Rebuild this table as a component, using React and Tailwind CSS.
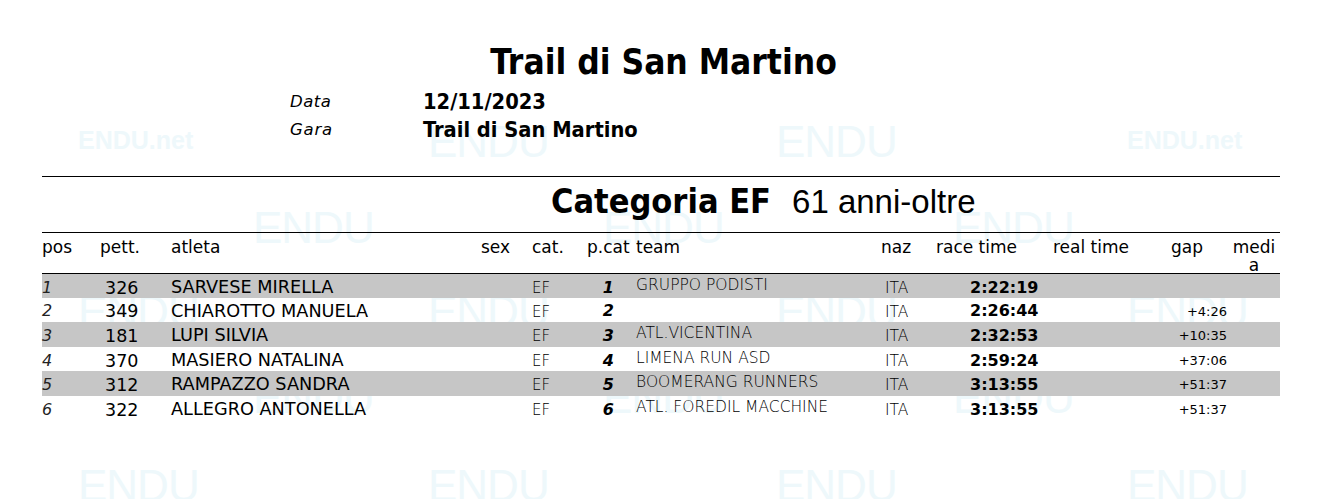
import React from "react";

const rows = [
  { pos: "1", pett: "326", name: "SARVESE MIRELLA", cat: "EF", pcat: "1", team: "GRUPPO PODISTI", naz: "ITA", race: "2:22:19", gap: "", gray: true, h: "h-[24px]" },
  { pos: "2", pett: "349", name: "CHIAROTTO MANUELA", cat: "EF", pcat: "2", team: "", naz: "ITA", race: "2:26:44", gap: "+4:26", gray: false, h: "h-[24px]" },
  { pos: "3", pett: "181", name: "LUPI SILVIA", cat: "EF", pcat: "3", team: "ATL.VICENTINA", naz: "ITA", race: "2:32:53", gap: "+10:35", gray: true, h: "h-[25px]" },
  { pos: "4", pett: "370", name: "MASIERO NATALINA", cat: "EF", pcat: "4", team: "LIMENA RUN ASD", naz: "ITA", race: "2:59:24", gap: "+37:06", gray: false, h: "h-[24px]" },
  { pos: "5", pett: "312", name: "RAMPAZZO SANDRA", cat: "EF", pcat: "5", team: "BOOMERANG RUNNERS", naz: "ITA", race: "3:13:55", gap: "+51:37", gray: true, h: "h-[25px]" },
  { pos: "6", pett: "322", name: "ALLEGRO ANTONELLA", cat: "EF", pcat: "6", team: "ATL. FOREDIL MACCHINE", naz: "ITA", race: "3:13:55", gap: "+51:37", gray: false, h: "h-[24px]" },
];

const marks = [
  { t: "ENDU.net", x: "left-[78px]", y: "top-[128px]", s: "small" },
  { t: "ENDU", x: "left-[428px]", y: "top-[120px]" },
  { t: "ENDU", x: "left-[776px]", y: "top-[120px]" },
  { t: "ENDU.net", x: "left-[1127px]", y: "top-[128px]", s: "small" },
  { t: "ENDU", x: "left-[253px]", y: "top-[206px]" },
  { t: "ENDU", x: "left-[603px]", y: "top-[206px]" },
  { t: "ENDU", x: "left-[953px]", y: "top-[206px]" },
  { t: "ENDU", x: "left-[78px]", y: "top-[290px]" },
  { t: "ENDU", x: "left-[428px]", y: "top-[290px]" },
  { t: "ENDU", x: "left-[776px]", y: "top-[290px]" },
  { t: "ENDU", x: "left-[1127px]", y: "top-[290px]" },
  { t: "ENDU", x: "left-[253px]", y: "top-[376px]" },
  { t: "ENDU", x: "left-[603px]", y: "top-[376px]" },
  { t: "ENDU", x: "left-[953px]", y: "top-[376px]" },
  { t: "ENDU", x: "left-[78px]", y: "top-[464px]" },
  { t: "ENDU", x: "left-[428px]", y: "top-[464px]" },
  { t: "ENDU", x: "left-[776px]", y: "top-[464px]" },
  { t: "ENDU", x: "left-[1127px]", y: "top-[464px]" },
];

const COLS = "grid grid-cols-[58px_71px_310px_51px_55px_49px_245px_55px_117px_118px_61px_48px]";
const dv = "font-['DejaVu_Sans',sans-serif]";
const dvc = "font-['DejaVu_Sans_Condensed','DejaVu_Sans',sans-serif]";

export default function App() {
  return (
    <div className="relative w-[1323px] h-[499px] overflow-hidden bg-white text-black">
      <div className="absolute inset-0 z-0" aria-hidden="true">
        {marks.map((m, i) => (
          <div
            key={i}
            className={`absolute ${m.x} ${m.y} font-['Liberation_Sans',sans-serif] leading-none text-[#eef8fb] ${
              m.s === "small" ? "text-[25px] font-bold" : "text-[44px] tracking-[-1px]"
            }`}
          >
            {m.t}
          </div>
        ))}
      </div>

      <div className="relative z-10">
        <div className={`pt-[42px] text-center ${dvc} font-bold text-[35px] leading-[40px] pl-[4px]`}>
          Trail di San Martino
        </div>

        <div className="mt-[6px] pl-[290px]">
          <div className="flex h-[28px] items-center">
            <div className={`w-[133px] ${dv} italic text-[16.5px] tracking-[0.5px]`}>Data</div>
            <div className={`${dvc} font-bold text-[21.7px]`}>12/11/2023</div>
          </div>
          <div className="flex h-[28px] items-center">
            <div className={`w-[133px] ${dv} italic text-[16.5px] tracking-[0.8px]`}>Gara</div>
            <div className={`${dvc} font-bold text-[21.7px]`}>Trail di San Martino</div>
          </div>
        </div>

        <div className="ml-[42px] w-[1238px]">
          <div className="mt-[32px] h-px bg-black" />

          <div className="mt-[4px] mb-[11px] pl-[509px] flex items-baseline h-[40px] leading-[40px]">
            <span className={`${dvc} font-bold text-[34px]`}>Categoria EF</span>
            <span className="ml-[21px] font-['Liberation_Sans',sans-serif] text-[33px]">61 anni-oltre</span>
          </div>

          <div className="h-px bg-black" />

          <div className={`${COLS} h-[41px] pt-[5px] ${dv} text-[17px] leading-[18px] border-b border-black`}>
            <div>pos</div>
            <div>pett.</div>
            <div>atleta</div>
            <div>sex</div>
            <div>cat.</div>
            <div>p.cat</div>
            <div>team</div>
            <div>naz</div>
            <div>race time</div>
            <div>real time</div>
            <div>gap</div>
            <div className="text-center w-[44px]">
              medi
              <br />a
            </div>
          </div>

          {rows.map((r, i) => (
            <div
              key={i}
              className={`${COLS} ${r.h} items-center ${r.gray ? "bg-[#c6c6c6]" : "bg-transparent"}`}
            >
              <div className={`${dv} font-extralight italic text-[16px] text-[#222]`}>{r.pos}</div>
              <div className={`${dv} text-[17.5px] pl-[5px]`}>{r.pett}</div>
              <div className={`${dv} text-[17.7px] whitespace-nowrap`}>{r.name}</div>
              <div />
              <div className={`${dv} font-extralight text-[15px] pt-[2px]`}>{r.cat}</div>
              <div className={`${dv} font-bold italic text-[16px] text-right pr-[22px]`}>{r.pcat}</div>
              <div className={`${dv} font-extralight text-[15.5px] whitespace-nowrap mb-[4px]`}>{r.team}</div>
              <div className={`${dv} font-extralight text-[15.5px] pl-[4px] pt-[2px]`}>{r.naz}</div>
              <div className={`${dv} font-bold text-[16px] pl-[34px]`}>{r.race}</div>
              <div />
              <div className={`${dv} text-[13px] text-right pr-[5px]`}>{r.gap}</div>
              <div />
            </div>
          ))}
        </div>
      </div>
    </div>
  );
}
